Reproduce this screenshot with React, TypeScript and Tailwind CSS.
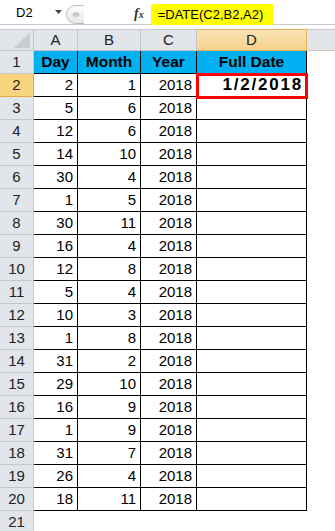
import React from "react";

const data: [number, number][] = [
  [2, 1], [5, 6], [12, 6], [14, 10], [30, 4], [1, 5], [30, 11], [16, 4], [12, 8],
  [5, 4], [10, 3], [1, 8], [31, 2], [29, 10], [16, 9], [1, 9], [31, 7], [26, 4], [18, 11],
];

const hdr = "bg-[#e2e5e9] border-r border-b border-[#c4c8cd] flex items-center justify-center text-[15px] text-[#222]";
const cell = "border-r border-b border-black flex items-center justify-end pr-[4px] text-[15px] text-black";

export default function App() {
  return (
    <div className="w-[335px] h-[531px] bg-white overflow-hidden font-['Liberation_Sans',Arial,sans-serif] text-black">
      {/* formula bar */}
      <div className="h-[25px] border-b border-[#c6c9ce] flex items-end">
        <div className="w-[66px] h-[24px] flex items-center self-start">
          <span className="ml-[16px] text-[13px] leading-none">D2</span>
          <svg width="7" height="4" viewBox="0 0 7 4" className="ml-[22px]">
            <polygon points="0,0 7,0 3.5,4" fill="#444" />
          </svg>
        </div>
        <div className="self-start mt-[5px]">
          <svg width="18" height="19" viewBox="0 0 18 19">
            <defs>
              <linearGradient id="g" x1="0" y1="0" x2="0" y2="1">
                <stop offset="0" stopColor="#ffffff" />
                <stop offset="1" stopColor="#e3e5e8" />
              </linearGradient>
            </defs>
            <path d="M18 0.5 H9.5 A9 9 0 0 0 9.5 18.5 H18" fill="url(#g)" stroke="#b9bdc2" strokeWidth="1" />
            <ellipse cx="10" cy="9.5" rx="3.5" ry="2.5" fill="#c6c9cd" />
          </svg>
        </div>
        <div className="self-start mt-[7px] ml-[50px] font-['Liberation_Serif',serif] italic font-bold text-[14px] leading-none text-[#333]">
          f<span className="text-[10px]">x</span>
        </div>
        <div className="ml-[7px] mb-[-1px] h-[21px] w-[122px] bg-[#ffff00] flex items-center pl-[7px] text-[13px] relative">
          =DATE(C2,B2,A2)
        </div>
      </div>
      <div className="h-[4px]" />
      {/* grid */}
      <div className="grid grid-cols-[34px_44px_63px_56px_110px_1fr] grid-rows-[22px_repeat(21,23px)]">
        {/* column headers */}
        <div className={hdr + " border-t relative"}>
          <svg width="16" height="16" viewBox="0 0 16 16" className="absolute right-[3px] bottom-[2px]">
            <polygon points="16,0 16,16 0,16" fill="#c9ccd1" />
          </svg>
        </div>
        <div className={hdr + " border-t"}>A</div>
        <div className={hdr + " border-t"}>B</div>
        <div className={hdr + " border-t"}>C</div>
        <div className="bg-gradient-to-b from-[#fae3b3] to-[#f6d38c] border-t border-r border-b border-[#e6b455] flex items-center justify-center text-[15px] text-[#222]">D</div>
        <div className="bg-[#e2e5e9] border-t border-b border-[#c4c8cd]" />

        {/* row 1 */}
        <div className={hdr}>1</div>
        {["Day", "Month", "Year", "Full Date"].map((t) => (
          <div key={t} className="bg-[#00b0f0] border-r border-b border-black flex items-center justify-center text-[15.5px] font-bold">
            {t}
          </div>
        ))}
        <div />

        {data.map(([d, m], i) => {
          const r = i + 2;
          return (
            <React.Fragment key={r}>
              <div
                className={
                  r === 2
                    ? "bg-[#f9d57f] border-r border-b border-[#e2a944] flex items-center justify-center text-[15px] text-[#222]"
                    : hdr
                }
              >
                {r}
              </div>
              <div className={cell}>{d}</div>
              <div className={cell}>{m}</div>
              <div className={cell}>2018</div>
              <div className={cell + " relative"}>
                {r === 2 && (
                  <>
                    <span className="font-bold text-[17px] tracking-[1.8px] mr-[-1px]">1/2/2018</span>
                    <div className="absolute left-[-1px] top-[-1px] w-[112px] h-[26px] border-[3px] border-[#ff0000] z-10" />
                  </>
                )}
              </div>
              <div />
            </React.Fragment>
          );
        })}

        {/* row 21 */}
        <div className={hdr}>21</div>
        <div />
        <div />
        <div />
        <div />
        <div />
      </div>
    </div>
  );
}
